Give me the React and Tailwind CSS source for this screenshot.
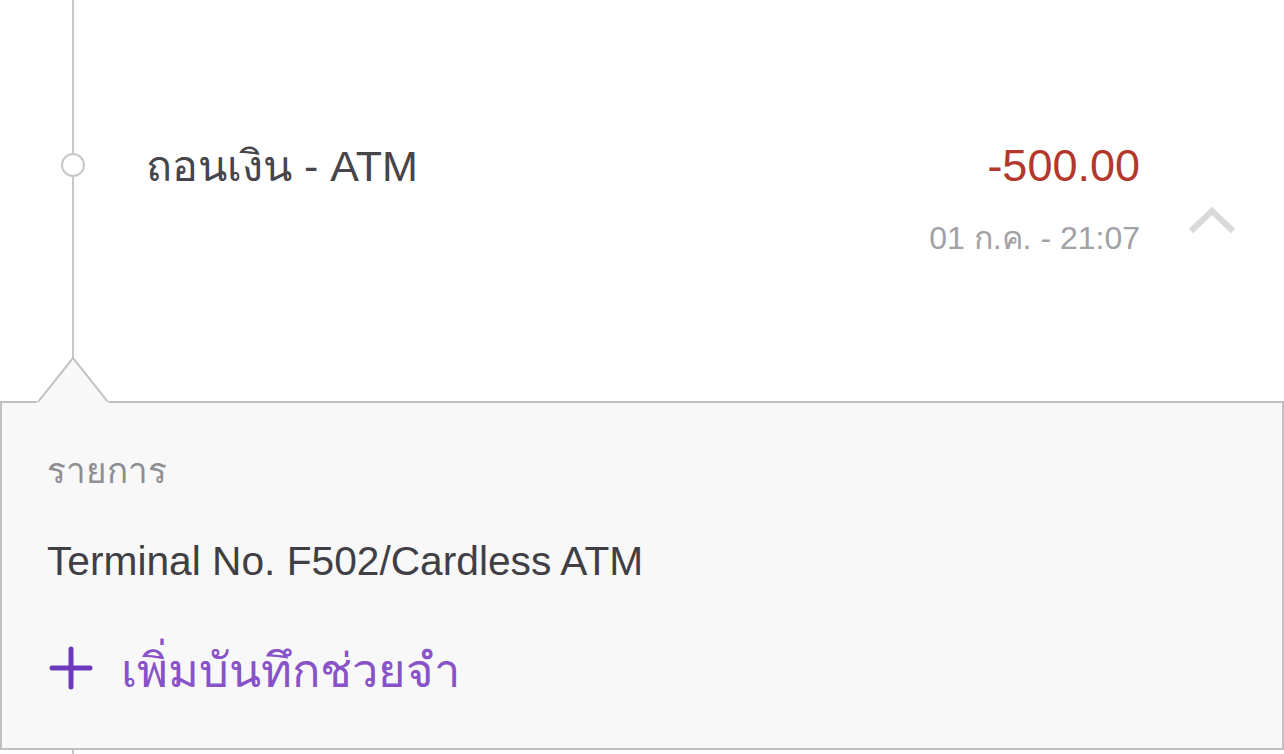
import React from "react";

export default function App() {
  return (
    <div
      className="relative w-[1284px] h-[754px] bg-white overflow-hidden"
      style={{ fontFamily: '"Liberation Sans", "Noto Sans", "DejaVu Sans", sans-serif' }}
    >
      {/* top row */}
      <div className="flex h-[358px]">
        <div className="w-[146px] flex flex-col items-center shrink-0">
          <div className="w-[2px] h-[153px] bg-[#c7c7cc]" />
          <div className="w-[24px] h-[24px] rounded-full border-2 border-[#c7c7cc] bg-white" />
          <div className="w-[2px] flex-1 bg-[#c7c7cc]" />
        </div>
        <div className="flex-1 flex pt-[139px]">
          <div className="w-[994px] flex flex-col">
            <div className="flex justify-between items-center h-[54px]">
              <span className="text-[43px] leading-[54px] text-[#46454b]">ถอนเงิน - ATM</span>
              <span className="text-[45px] leading-[54px] text-[#b3372b]">-500.00</span>
            </div>
            <div className="flex justify-end mt-[26px]">
              <span className="text-[32px] leading-[38px] text-[#a1a1a6]">01 ก.ค. - 21:07</span>
            </div>
          </div>
          <div className="flex-1 flex justify-center pt-[66px]">
            <svg width="48" height="30" viewBox="0 0 48 30">
              <polyline
                points="3,26 24,6 45,26"
                fill="none"
                stroke="#d9d9d9"
                strokeWidth="6"
              />
            </svg>
          </div>
        </div>
      </div>

      {/* panel */}
      <div className="relative mt-[43px] h-[349px] bg-[#f8f8f8] border-2 border-[#c0c0c0] flex flex-col pl-[45px]">
        <svg
          className="absolute left-[35px] top-[-46px]"
          width="72"
          height="48"
          viewBox="0 0 72 48"
        >
          <polygon points="1,45 36,1 71,45" fill="#f8f8f8" />
          <rect x="0" y="44" width="72" height="4" fill="#f8f8f8" />
          <polyline points="1,45 36,1 71,45" fill="none" stroke="#c0c0c0" strokeWidth="2" />
        </svg>
        <div className="mt-[48px] text-[35px] leading-[40px] text-[#8e8e93]">รายการ</div>
        <div className="mt-[47px] text-[40.7px] leading-[46px] text-[#403f45]">
          Terminal No. F502/Cardless ATM
        </div>
        <div className="mt-[55px] flex items-center">
          <svg width="46" height="44" viewBox="0 0 46 44" className="shrink-0">
            <line x1="24" y1="3" x2="24" y2="41" stroke="#6c3bbd" strokeWidth="5" strokeLinecap="round" />
            <line x1="5" y1="22" x2="43" y2="22" stroke="#6c3bbd" strokeWidth="5" strokeLinecap="round" />
          </svg>
          <span className="ml-[28px] mt-[6px] text-[47px] leading-[52px] text-[#8852c8]">เพิ่มบันทึกช่วยจำ</span>
        </div>
      </div>
      <div className="absolute left-[72px] top-[750px] w-[2px] h-[10px] bg-[#c7c7cc]" />
    </div>
  );
}
